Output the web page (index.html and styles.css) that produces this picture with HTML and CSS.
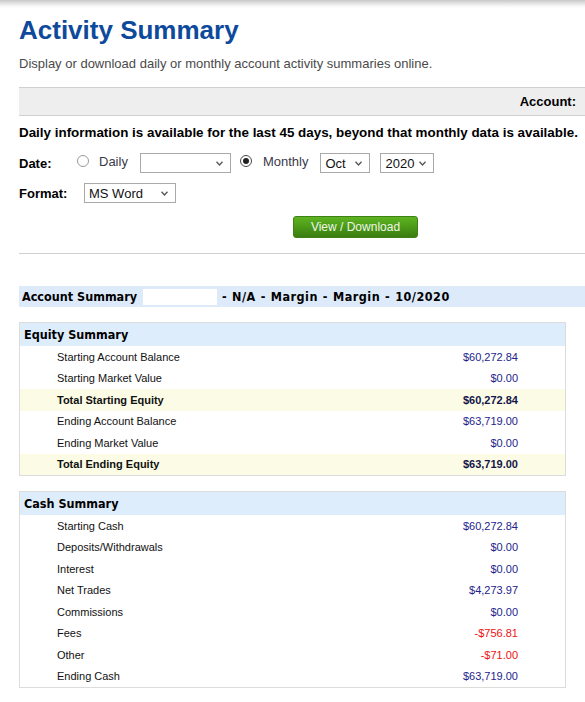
FILE: index.html
```html
<!DOCTYPE html>
<html lang="en">
<head>
<meta charset="utf-8">
<title>Activity Summary</title>
<link rel="stylesheet" href="styles.css">
</head>
<body>
<div class="topshadow"></div>
<main class="page">
  <h1 class="title">Activity Summary</h1>
  <p class="subtitle">Display or download daily or monthly account activity summaries online.</p>

  <div class="accountbar"><span class="accountlabel">Account:</span></div>

  <p class="info">Daily information is available for the last 45 days, beyond that monthly data is available.</p>

  <div class="formrow">
    <span class="fieldlabel datelabel">Date:</span>
    <span class="radio"></span>
    <span class="optlabel">Daily</span>
    <span class="select sel-daily"><span class="selval"></span><svg class="chev" viewBox="0 0 7 5" width="7" height="5"><path d="M0.5 0.8 L3.5 4 L6.5 0.8" fill="none" stroke="#555" stroke-width="1.3"/></svg></span>
    <span class="radio checked"></span>
    <span class="optlabel">Monthly</span>
    <span class="select sel-month"><span class="selval">Oct</span><svg class="chev" viewBox="0 0 7 5" width="7" height="5"><path d="M0.5 0.8 L3.5 4 L6.5 0.8" fill="none" stroke="#555" stroke-width="1.3"/></svg></span>
    <span class="select sel-year"><span class="selval">2020</span><svg class="chev" viewBox="0 0 7 5" width="7" height="5"><path d="M0.5 0.8 L3.5 4 L6.5 0.8" fill="none" stroke="#555" stroke-width="1.3"/></svg></span>
  </div>

  <div class="formrow formatrow">
    <span class="fieldlabel formatlabel">Format:</span>
    <span class="select sel-format"><span class="selval">MS Word</span><svg class="chev" viewBox="0 0 7 5" width="7" height="5"><path d="M0.5 0.8 L3.5 4 L6.5 0.8" fill="none" stroke="#555" stroke-width="1.3"/></svg></span>
  </div>

  <div class="btnrow"><button class="btn">View / Download</button></div>

  <hr class="rule">

  <div class="summarybar">Account Summary <span class="redact"></span><span class="tail"> - N/A - Margin - Margin - 10/2020</span></div>

  <section class="box equity">
    <div class="boxhead">Equity Summary</div>
    <div class="row"><span>Starting Account Balance</span><span class="val">$60,272.84</span></div>
    <div class="row"><span>Starting Market Value</span><span class="val">$0.00</span></div>
    <div class="row total"><span>Total Starting Equity</span><span class="val">$60,272.84</span></div>
    <div class="row"><span>Ending Account Balance</span><span class="val">$63,719.00</span></div>
    <div class="row"><span>Ending Market Value</span><span class="val">$0.00</span></div>
    <div class="row total"><span>Total Ending Equity</span><span class="val">$63,719.00</span></div>
  </section>

  <section class="box cash">
    <div class="boxhead">Cash Summary</div>
    <div class="row"><span>Starting Cash</span><span class="val">$60,272.84</span></div>
    <div class="row"><span>Deposits/Withdrawals</span><span class="val">$0.00</span></div>
    <div class="row"><span>Interest</span><span class="val">$0.00</span></div>
    <div class="row"><span>Net Trades</span><span class="val">$4,273.97</span></div>
    <div class="row"><span>Commissions</span><span class="val">$0.00</span></div>
    <div class="row"><span>Fees</span><span class="val neg">-$756.81</span></div>
    <div class="row"><span>Other</span><span class="val neg">-$71.00</span></div>
    <div class="row"><span>Ending Cash</span><span class="val">$63,719.00</span></div>
  </section>
</main>
</body>
</html>
```

FILE: styles.css
```css
html, body {
  margin: 0;
  padding: 0;
  background: #fff;
  overflow: hidden;
}
body {
  font-family: "Liberation Sans", Arial, sans-serif;
  color: #000;
}
.topshadow {
  height: 8px;
  background: linear-gradient(#c9c9c9, #f4f4f4 70%, #fff);
}
.page {
  margin-left: 19px;
  width: 566px;
}
.title {
  margin: 7px 0 0;
  font-size: 26px;
  line-height: 30px;
  font-weight: bold;
  color: #0e4a9c;
}
.subtitle {
  margin: 11px 0 0;
  font-size: 13px;
  line-height: 16px;
  color: #4a4a4a;
}
.accountbar {
  margin-top: 15px;
  height: 27px;
  background: #eeeeee;
  border-top: 1px solid #d0d0d0;
  border-bottom: 1px solid #d0d0d0;
  display: flex;
  justify-content: flex-end;
  align-items: center;
  padding-right: 9px;
}
.accountlabel {
  font-size: 13px;
  font-weight: bold;
}
.info {
  margin: 9px 0 0;
  font-size: 13.4px;
  line-height: 16px;
  font-weight: bold;
  white-space: nowrap;
}
.formrow {
  margin-top: 12px;
  height: 20px;
  display: flex;
  align-items: center;
  font-size: 13px;
}
.formatrow {
  margin-top: 10px;
}
.fieldlabel {
  font-weight: bold;
}
.datelabel { width: 58px; }
.formatlabel { width: 65px; }
.radio {
  width: 12px;
  height: 12px;
  box-sizing: border-box;
  border: 1px solid #9a9a9a;
  border-radius: 50%;
  background: #fff;
  margin-right: 10px;
  margin-top: -4px;
  display: flex;
  align-items: center;
  justify-content: center;
}
.radio.checked {
  border-color: #4a4a4a;
  margin-left: 9px;
  margin-right: 11px;
}
.radio.checked::after {
  content: "";
  width: 6px;
  height: 6px;
  border-radius: 50%;
  background: #222;
}
.optlabel {
  color: #3a3a4a;
  margin-top: -3px;
}
.select {
  height: 20px;
  box-sizing: border-box;
  border: 1px solid #a9a9a9;
  background: #fff;
  display: flex;
  align-items: center;
  justify-content: space-between;
  padding: 0 7px 0 4px;
  color: #111;
}
.chev { display: block; margin-top: 1px; }
.sel-daily { width: 91px; margin-left: 12px; }
.sel-month { width: 50px; margin-left: 12px; }
.sel-year { width: 54px; margin-left: 10px; }
.sel-format { width: 92px; }
.btnrow {
  margin-top: 13px;
  padding-left: 274px;
}
.btn {
  display: block;
  width: 125px;
  height: 22px;
  border: 1px solid #3f8114;
  border-radius: 3px;
  background: linear-gradient(#5db321, #4c9a18 50%, #3a7c10);
  color: #eef7e6;
  font-family: "Liberation Sans", Arial, sans-serif;
  font-size: 12px;
  line-height: 20px;
  padding: 0;
  text-align: center;
}
.rule {
  margin: 15px 0 0;
  border: 0;
  height: 1px;
  background: #d0d0d0;
}
.summarybar {
  margin-top: 32px;
  height: 21px;
  background: #ddeafa;
  display: flex;
  align-items: center;
  padding-left: 3px;
  font-family: "DejaVu Sans Condensed", "DejaVu Sans", sans-serif;
  font-size: 12.5px;
  font-weight: bold;
  white-space: pre;
  color: #000;
}
.redact {
  display: inline-block;
  width: 74px;
  height: 16px;
  background: #fff;
  margin: 0 0 0 2px;
}
.tail {
  word-spacing: 0.5px;
  letter-spacing: 0.5px;
}
.box {
  margin-top: 15px;
  width: 545px;
  border: 1px solid #dcdcdc;
}
.boxhead {
  height: 23px;
  background: #deedfc;
  display: flex;
  align-items: center;
  padding-left: 4px;
  font-family: "DejaVu Sans Condensed", "DejaVu Sans", sans-serif;
  font-size: 12.5px;
  font-weight: bold;
}
.row {
  height: 21.5px;
  display: flex;
  align-items: center;
  justify-content: space-between;
  padding: 0 47px 0 37px;
  font-size: 11px;
  color: #111;
}
.val {
  color: #23238c;
}
.val.neg {
  color: #f01010;
}
.row.total {
  background: #fcfce6;
  font-weight: bold;
}
.row.total .val {
  color: #14144a;
}
```
